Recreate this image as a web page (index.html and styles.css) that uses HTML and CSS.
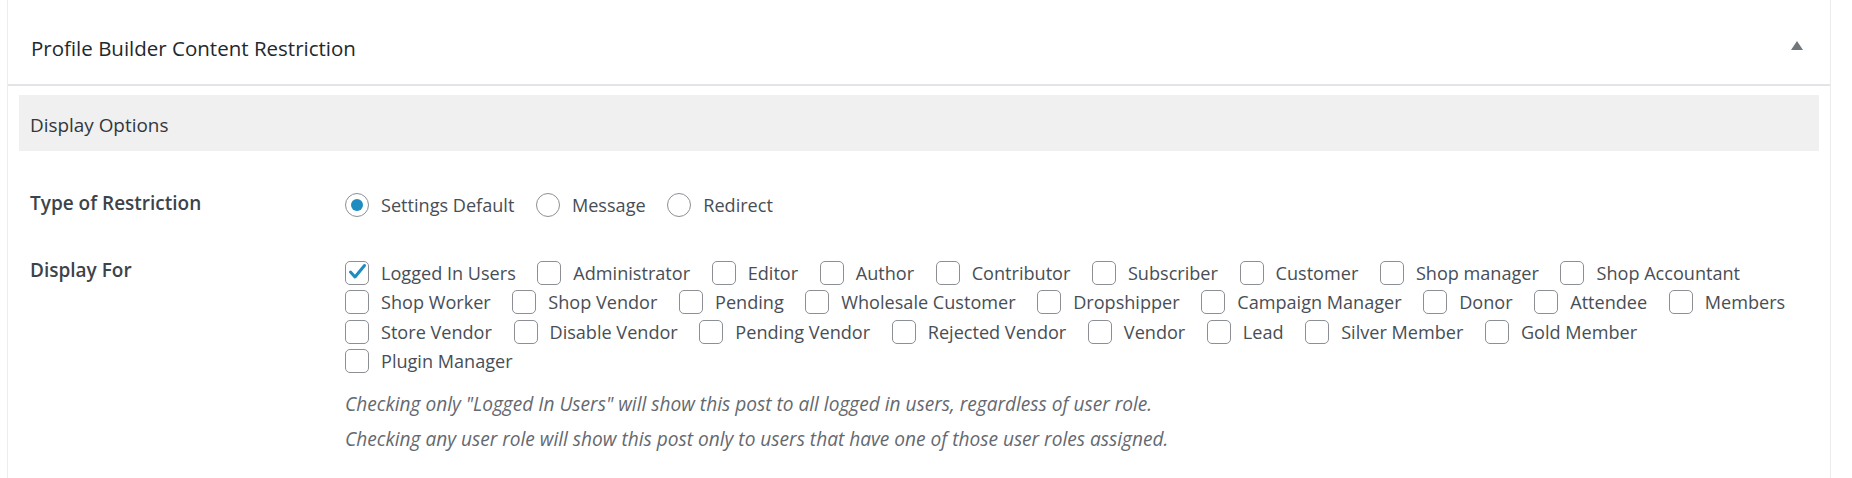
FILE: index.html
```html
<!DOCTYPE html>
<html lang="en">
<head>
<meta charset="utf-8">
<title>Profile Builder Content Restriction</title>
<link rel="stylesheet" href="styles.css">
</head>
<body>
<div class="postbox">
  <div class="postbox-header">
    <h2 class="hndle">Profile Builder Content Restriction</h2>
    <button class="toggle" type="button" aria-label="Toggle panel"><span class="toggle-indicator"></span></button>
  </div>
  <div class="inside">
    <h4 class="section-title">Display Options</h4>

    <div class="field-row">
      <div class="field-label">Type of Restriction</div>
      <div class="field-control">
        <div class="options">
          <label class="opt"><span class="radio is-checked"></span><span>Settings Default</span></label>
          <label class="opt"><span class="radio"></span><span>Message</span></label>
          <label class="opt"><span class="radio"></span><span>Redirect</span></label>
        </div>
      </div>
    </div>

    <div class="field-row field-row-display">
      <div class="field-label">Display For</div>
      <div class="field-control">
        <div class="options">
          <label class="opt"><span class="check is-checked"><svg viewBox="0 0 24 24" width="24" height="24"><polyline points="5.5,12 10,17 19.5,5.5"/></svg></span><span>Logged In Users</span></label>
          <label class="opt"><span class="check"></span><span>Administrator</span></label>
          <label class="opt"><span class="check"></span><span>Editor</span></label>
          <label class="opt"><span class="check"></span><span>Author</span></label>
          <label class="opt"><span class="check"></span><span>Contributor</span></label>
          <label class="opt"><span class="check"></span><span>Subscriber</span></label>
          <label class="opt"><span class="check"></span><span>Customer</span></label>
          <label class="opt"><span class="check"></span><span>Shop manager</span></label>
          <label class="opt"><span class="check"></span><span>Shop Accountant</span></label>
          <label class="opt"><span class="check"></span><span>Shop Worker</span></label>
          <label class="opt"><span class="check"></span><span>Shop Vendor</span></label>
          <label class="opt"><span class="check"></span><span>Pending</span></label>
          <label class="opt"><span class="check"></span><span>Wholesale Customer</span></label>
          <label class="opt"><span class="check"></span><span>Dropshipper</span></label>
          <label class="opt"><span class="check"></span><span>Campaign Manager</span></label>
          <label class="opt"><span class="check"></span><span>Donor</span></label>
          <label class="opt"><span class="check"></span><span>Attendee</span></label>
          <label class="opt"><span class="check"></span><span>Members</span></label>
          <label class="opt"><span class="check"></span><span>Store Vendor</span></label>
          <label class="opt"><span class="check"></span><span>Disable Vendor</span></label>
          <label class="opt"><span class="check"></span><span>Pending Vendor</span></label>
          <label class="opt"><span class="check"></span><span>Rejected Vendor</span></label>
          <label class="opt"><span class="check"></span><span>Vendor</span></label>
          <label class="opt"><span class="check"></span><span>Lead</span></label>
          <label class="opt"><span class="check"></span><span>Silver Member</span></label>
          <label class="opt"><span class="check"></span><span>Gold Member</span></label>
          <label class="opt"><span class="check"></span><span>Plugin Manager</span></label>
        </div>
        <p class="description">Checking only "Logged In Users" will show this post to all logged in users, regardless of user role.</p>
        <p class="description">Checking any user role will show this post only to users that have one of those user roles assigned.</p>
      </div>
    </div>
  </div>
</div>
</body>
</html>
```

FILE: styles.css
```css
* { box-sizing: border-box; }

html, body {
  margin: 0;
  padding: 0;
  background: #ffffff;
}

body {
  font-family: "Open Sans", "Noto Sans", sans-serif;
  color: #3c434a;
  width: 1852px;
  height: 478px;
  overflow: hidden;
}

.postbox {
  margin: 0 21px 0 7px;
  border-left: 1px solid #ececec;
  border-right: 1px solid #ececec;
  background: #fff;
  height: 478px;
}

.postbox-header {
  display: flex;
  align-items: center;
  justify-content: space-between;
  height: 86px;
  border-bottom: 2px solid #e2e4e7;
}

.hndle {
  margin: 0;
  padding: 12px 0 0 23px;
  font-size: 20.5px;
  font-weight: 400;
  line-height: 1;
  color: #23282d;
}

.toggle {
  width: 54px;
  height: 54px;
  margin: 6px 6px 0 0;
  padding: 0;
  border: 0;
  background: transparent;
  display: flex;
  align-items: center;
  justify-content: center;
}

.toggle-indicator {
  width: 0;
  height: 0;
  border-left: 6px solid transparent;
  border-right: 6px solid transparent;
  border-bottom: 9px solid #72777c;
}

.inside {
  padding: 9px 11px 0 11px;
}

.section-title {
  margin: 0;
  height: 56px;
  padding: 3px 11px 0 11px;
  display: flex;
  align-items: center;
  background: #f0f0f0;
  font-size: 18.9px;
  font-weight: 400;
  color: #32373c;
}

.field-row {
  display: grid;
  grid-template-columns: 315px 1fr;
  padding: 39px 0 0 11px;
}

.field-label {
  font-size: 19px;
  font-weight: 600;
  color: #3c434a;
  line-height: 29.3px;
  margin-top: -1px;
}

.field-row-display .field-label {
  margin-top: -2.5px;
}

.options {
  display: flex;
  flex-wrap: wrap;
  column-gap: 21.6px;
  margin-right: 2px;
}

.opt {
  display: flex;
  align-items: center;
  gap: 12px;
  height: 29.3px;
  font-size: 18.1px;
  color: #484e55;
  white-space: nowrap;
}

.radio,
.check {
  flex: none;
  width: 24px;
  height: 24px;
  border: 1.5px solid #8c8f94;
  background: #fff;
  display: flex;
  align-items: center;
  justify-content: center;
}

.radio {
  border-radius: 50%;
}

.radio.is-checked::after {
  content: "";
  width: 12px;
  height: 12px;
  border-radius: 50%;
  background: #1e8cbe;
}

.check {
  border-radius: 5px;
  position: relative;
}

.check svg {
  position: absolute;
  left: -1.5px;
  top: -1.5px;
}

.check polyline {
  fill: none;
  stroke: #1e8cbe;
  stroke-width: 3;
  stroke-linecap: round;
  stroke-linejoin: round;
}

.description {
  margin: 5px 0 0 0;
  font-size: 19.1px;
  font-style: italic;
  line-height: 29.3px;
  color: #646970;
}

.options + .description {
  margin-top: 15px;
}
```
